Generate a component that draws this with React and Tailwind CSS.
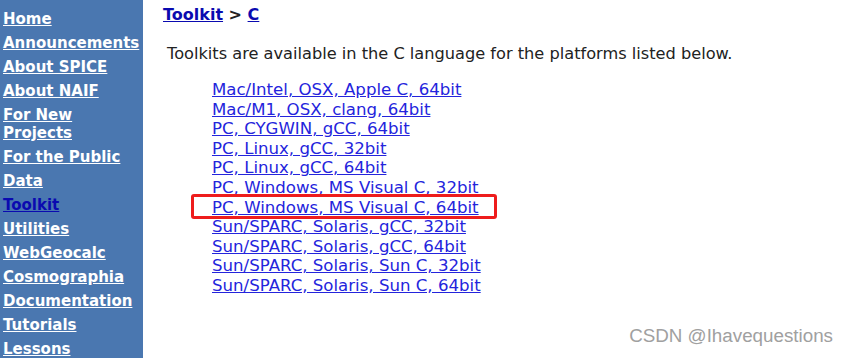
import React from "react";

const nav = [
  ["Home"],
  ["Announcements"],
  ["About SPICE"],
  ["About NAIF"],
  ["For New", "Projects"],
  ["For the Public"],
  ["Data"],
  ["Toolkit"],
  ["Utilities"],
  ["WebGeocalc"],
  ["Cosmographia"],
  ["Documentation"],
  ["Tutorials"],
  ["Lessons"],
];

const links = [
  "Mac/Intel, OSX, Apple C, 64bit",
  "Mac/M1, OSX, clang, 64bit",
  "PC, CYGWIN, gCC, 64bit",
  "PC, Linux, gCC, 32bit",
  "PC, Linux, gCC, 64bit",
  "PC, Windows, MS Visual C, 32bit",
  "PC, Windows, MS Visual C, 64bit",
  "Sun/SPARC, Solaris, gCC, 32bit",
  "Sun/SPARC, Solaris, gCC, 64bit",
  "Sun/SPARC, Solaris, Sun C, 32bit",
  "Sun/SPARC, Solaris, Sun C, 64bit",
];

export default function App() {
  return (
    <div className="relative flex w-[848px] h-[358px] overflow-hidden bg-white font-['DejaVu_Sans',Verdana,sans-serif]">
      <div className="w-[143px] shrink-0 bg-[#4a77b0] pl-[3px] pt-[10px] flex flex-col gap-[6px]">
        {nav.map((n) => (
          <a
            key={n[0]}
            className={`block text-[15px] leading-[18px] font-bold underline ${
              n[0] === "Toolkit" ? "text-[#0a0ab0]" : "text-white"
            }`}
          >
            {n.map((l) => (
              <span key={l} className="block">
                {l}
              </span>
            ))}
          </a>
        ))}
      </div>
      <div className="flex-1 pl-[20px] pt-[5px] text-[#222]">
        <div className="text-[16px] leading-[20px] font-bold">
          <a className="underline text-[#0a0ab0]">Toolkit</a>
          <span className="text-[#222]"> &gt; </span>
          <a className="underline text-[#0a0ab0]">C</a>
        </div>
        <p className="mt-[19px] ml-[4px] text-[16.2px] leading-[20px]">
          Toolkits are available in the C language for the platforms listed below.
        </p>
        <div className="mt-[16px] ml-[49px] flex flex-col">
          {links.map((l) => (
            <a
              key={l}
              className="relative block w-fit text-[16.6px] leading-[19.6px] text-[#2424dc] underline"
            >
              {l}
              {l === "PC, Windows, MS Visual C, 64bit" && (
                <span className="absolute left-[-21px] top-[-4px] w-[306px] h-[25px] border-[3px] border-[#ee1c1c] rounded-[3px]"></span>
              )}
            </a>
          ))}
        </div>
      </div>
      <div className="absolute right-[15px] bottom-[8px] text-[18.8px] text-[#a0a0a0] font-['Liberation_Sans',Arial,sans-serif]">
        CSDN @Ihavequestions
      </div>
    </div>
  );
}
